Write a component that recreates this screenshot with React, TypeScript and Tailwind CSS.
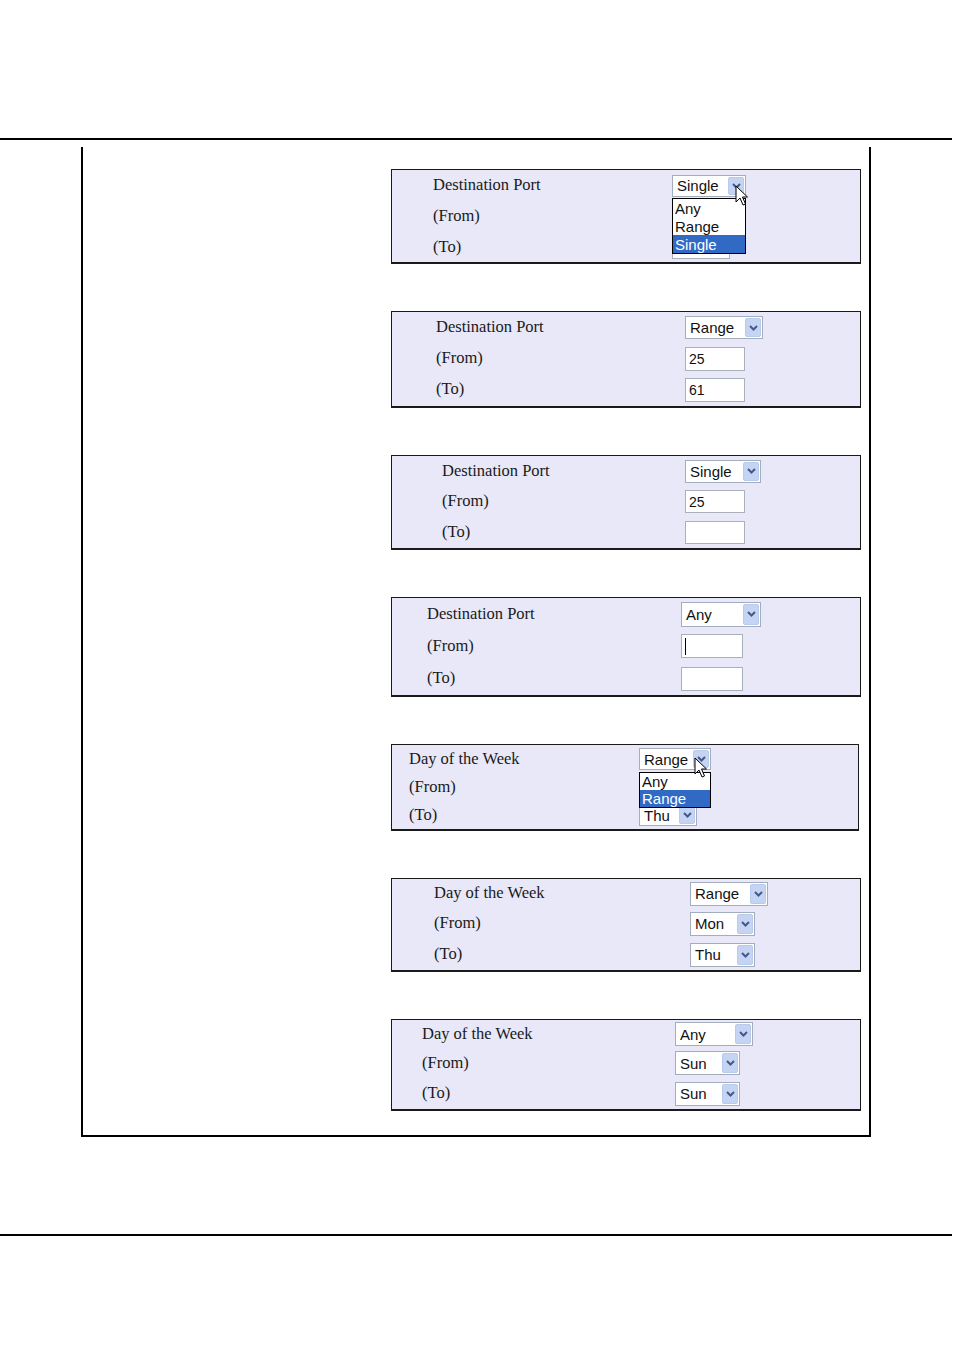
import React from 'react';

type Ctrl =
  | { kind: 'select'; value: string; w: string; h: string }
  | { kind: 'input'; value?: string; w: string; h: string; caret?: boolean };

interface Row {
  label: string;
  h: string;
  ctrl: Ctrl;
}

interface PanelDef {
  box: string;
  label: string;
  rows: Row[];
  list?: { pos: string; items: string[]; sel: number; itemH: string };
  cursor?: string;
}

const panels: PanelDef[] = [
  {
    box: 'h-[95px] w-[470px]',
    label: 'w-[280px] pl-[41px]',
    rows: [
      { label: 'Destination Port', h: 'h-[31px]', ctrl: { kind: 'select', value: 'Single', w: 'w-[74px]', h: 'h-[22px]' } },
      { label: '(From)', h: 'h-[31px]', ctrl: { kind: 'input', w: 'w-[58px]', h: 'h-[24px]' } },
      { label: '(To)', h: 'h-[30px]', ctrl: { kind: 'input', w: 'w-[58px]', h: 'h-[24px]' } },
    ],
    list: { pos: 'left-[280px] top-[28px] w-[74px]', items: ['Any', 'Range', 'Single'], sel: 2, itemH: 'h-[18px]' },
    cursor: 'left-[343px] top-[15px]',
  },
  {
    box: 'h-[97px] w-[470px]',
    label: 'w-[293px] pl-[44px]',
    rows: [
      { label: 'Destination Port', h: 'h-[31px]', ctrl: { kind: 'select', value: 'Range', w: 'w-[78px]', h: 'h-[23px]' } },
      { label: '(From)', h: 'h-[31px]', ctrl: { kind: 'input', value: '25', w: 'w-[60px]', h: 'h-[24px]' } },
      { label: '(To)', h: 'h-[31px]', ctrl: { kind: 'input', value: '61', w: 'w-[60px]', h: 'h-[24px]' } },
    ],
  },
  {
    box: 'h-[95px] w-[470px]',
    label: 'w-[293px] pl-[50px]',
    rows: [
      { label: 'Destination Port', h: 'h-[30px]', ctrl: { kind: 'select', value: 'Single', w: 'w-[76px]', h: 'h-[23px]' } },
      { label: '(From)', h: 'h-[31px]', ctrl: { kind: 'input', value: '25', w: 'w-[60px]', h: 'h-[23px]' } },
      { label: '(To)', h: 'h-[31px]', ctrl: { kind: 'input', w: 'w-[60px]', h: 'h-[23px]' } },
    ],
  },
  {
    box: 'h-[100px] w-[470px]',
    label: 'w-[289px] pl-[35px]',
    rows: [
      { label: 'Destination Port', h: 'h-[32px]', ctrl: { kind: 'select', value: 'Any', w: 'w-[80px]', h: 'h-[25px]' } },
      { label: '(From)', h: 'h-[32px]', ctrl: { kind: 'input', w: 'w-[62px]', h: 'h-[24px]', caret: true } },
      { label: '(To)', h: 'h-[33px]', ctrl: { kind: 'input', w: 'w-[62px]', h: 'h-[24px]' } },
    ],
  },
  {
    box: 'h-[87px] w-[468px]',
    label: 'w-[247px] pl-[17px]',
    rows: [
      { label: 'Day of the Week', h: 'h-[28px]', ctrl: { kind: 'select', value: 'Range', w: 'w-[72px]', h: 'h-[22px]' } },
      // covered by the open list
      { label: '(From)', h: 'h-[28px]', ctrl: { kind: 'select', value: '', w: 'w-[58px]', h: 'h-[22px]' } },
      { label: '(To)', h: 'h-[28px]', ctrl: { kind: 'select', value: 'Thu', w: 'w-[58px]', h: 'h-[21px]' } },
    ],
    list: { pos: 'left-[247px] top-[27px] w-[72px]', items: ['Any', 'Range'], sel: 1, itemH: 'h-[17px]' },
    cursor: 'left-[302px] top-[12px]',
  },
  {
    box: 'h-[94px] w-[470px]',
    label: 'w-[298px] pl-[42px]',
    rows: [
      { label: 'Day of the Week', h: 'h-[29px]', ctrl: { kind: 'select', value: 'Range', w: 'w-[78px]', h: 'h-[24px]' } },
      { label: '(From)', h: 'h-[31px]', ctrl: { kind: 'select', value: 'Mon', w: 'w-[65px]', h: 'h-[24px]' } },
      { label: '(To)', h: 'h-[31px]', ctrl: { kind: 'select', value: 'Thu', w: 'w-[65px]', h: 'h-[24px]' } },
    ],
  },
  {
    box: 'h-[92px] w-[470px]',
    label: 'w-[283px] pl-[30px]',
    rows: [
      { label: 'Day of the Week', h: 'h-[28px]', ctrl: { kind: 'select', value: 'Any', w: 'w-[78px]', h: 'h-[24px]' } },
      { label: '(From)', h: 'h-[30px]', ctrl: { kind: 'select', value: 'Sun', w: 'w-[65px]', h: 'h-[24px]' } },
      { label: '(To)', h: 'h-[31px]', ctrl: { kind: 'select', value: 'Sun', w: 'w-[65px]', h: 'h-[24px]' } },
    ],
  },
];

const sans = "font-['Liberation_Sans',Arial,sans-serif]";

function Chevron() {
  return (
    <svg width="9" height="6" viewBox="0 0 9 6">
      <path d="M1 1 L4.5 4.5 L8 1" fill="none" stroke="#44598a" strokeWidth="2" />
    </svg>
  );
}

function Control({ ctrl }: { ctrl: Ctrl }) {
  if (ctrl.kind === 'select') {
    return (
      <div className={`flex items-center border border-[#a4adbc] bg-white p-[1px] ${ctrl.w} ${ctrl.h}`}>
        <span className={`flex-1 pl-[3px] text-[15px] leading-none text-[#111] ${sans}`}>{ctrl.value}</span>
        <span className="flex h-full w-[16px] items-center justify-center rounded-[2px] border border-[#b9cbec] bg-[#c4d4f2]">
          <Chevron />
        </span>
      </div>
    );
  }
  return (
    <div className={`flex items-center border border-[#a9b0ba] bg-white pl-[3px] ${ctrl.w} ${ctrl.h}`}>
      {ctrl.caret && <span className="h-[17px] w-[1px] bg-black" />}
      {ctrl.value && <span className={`text-[14px] leading-none text-[#111] ${sans}`}>{ctrl.value}</span>}
    </div>
  );
}

function Pointer() {
  return (
    <svg width="14" height="22" viewBox="0 0 14 22">
      <path d="M1 1 L1 17 L5 13 L8 20 L10.5 19 L7.5 12 L12.5 12 Z" fill="white" stroke="black" strokeWidth="1" strokeLinejoin="round" />
    </svg>
  );
}

function Panel({ p }: { p: PanelDef }) {
  return (
    <div className={`relative border border-b-2 border-[#1a1a1a] bg-[#e8e8f8] ${p.box}`}>
      {p.rows.map((r, i) => (
        <div key={i} className={`flex items-center ${r.h}`}>
          <span className={`shrink-0 text-[16.5px] leading-none text-[#1a1a1a] font-['Liberation_Serif','Times_New_Roman',serif] ${p.label}`}>
            {r.label}
          </span>
          <Control ctrl={r.ctrl} />
        </div>
      ))}
      {p.list && (
        <div className={`absolute border border-black bg-white ${p.list.pos}`}>
          {p.list.items.map((it, i) => (
            <div
              key={it}
              className={`flex items-center pl-[2px] text-[15px] leading-none ${sans} ${p.list!.itemH} ${
                i === p.list!.sel ? 'bg-[#316ac5] text-white' : 'text-[#111]'
              }`}
            >
              {it}
            </div>
          ))}
        </div>
      )}
      {p.cursor && (
        <div className={`absolute ${p.cursor}`}>
          <Pointer />
        </div>
      )}
    </div>
  );
}

export default function App() {
  return (
    <div className="h-[1355px] w-[954px] bg-white pt-[138px]">
      <div className="h-[2px] w-[952px] bg-black" />
      <div className="ml-[81px] mt-[7px] flex w-[790px] flex-col gap-[47px] border-x-2 border-b-2 border-black pb-[24px] pl-[308px] pt-[22px]">
        {panels.map((p, i) => (
          <Panel key={i} p={p} />
        ))}
      </div>
      <div className="mt-[97px] h-[2px] w-[952px] bg-black" />
    </div>
  );
}
